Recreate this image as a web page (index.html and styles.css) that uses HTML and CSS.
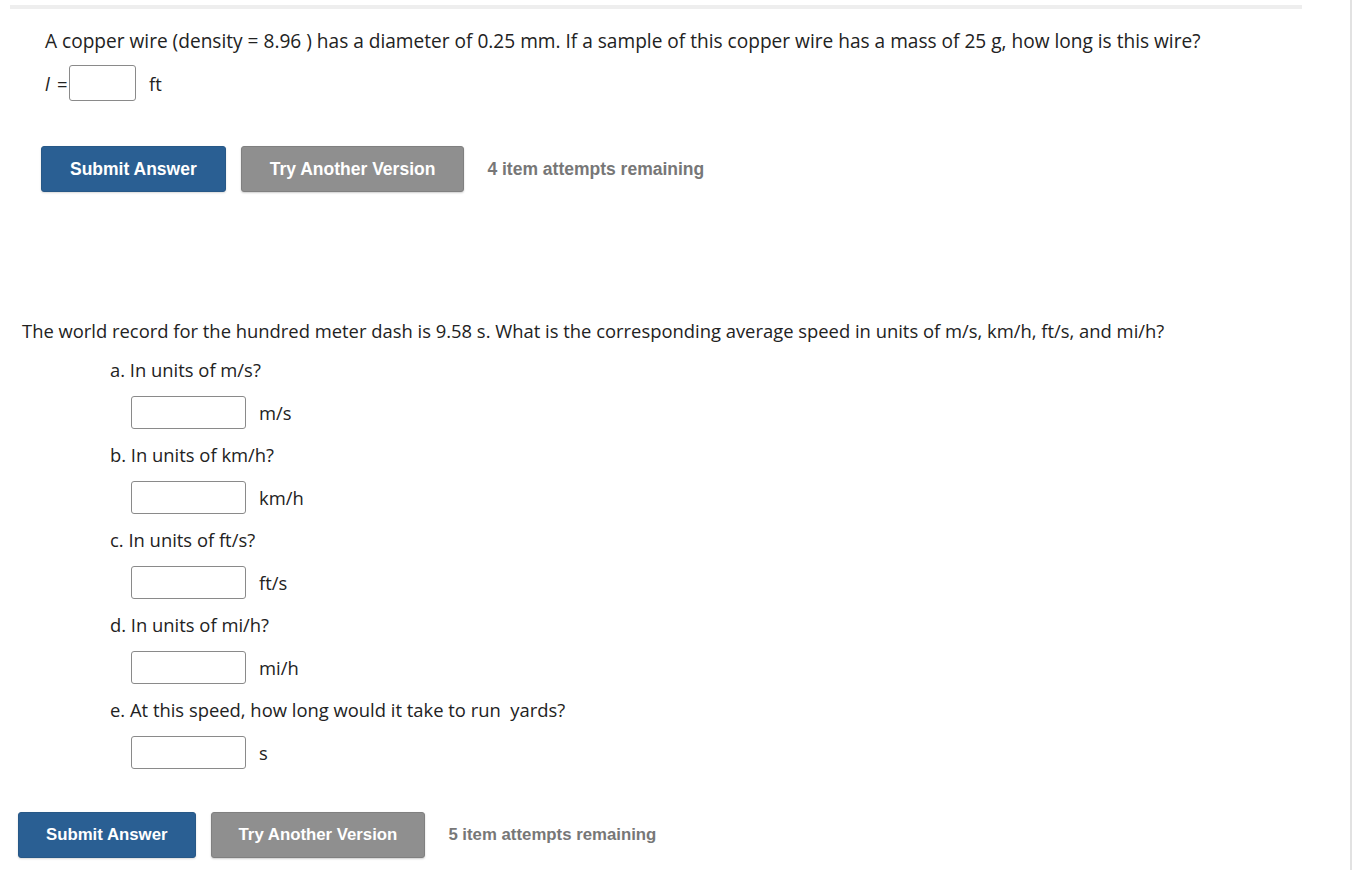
FILE: index.html
```html
<!DOCTYPE html>
<html>
<head>
<meta charset="utf-8">
<link rel="stylesheet" href="styles.css">
</head>
<body>
<div class="page">
  <div class="topbar"></div>

  <section class="q1">
    <p class="qtext">A copper wire (density = 8.96 ) has a diameter of 0.25 mm. If a sample of this copper wire has a mass of 25 g, how long is this wire?</p>
    <div class="answer-row">
      <span class="var">l</span><span class="eq">=</span><span class="box box-small"></span><span class="unit">ft</span>
    </div>
    <div class="actions">
      <button class="btn btn-primary">Submit Answer</button>
      <button class="btn btn-secondary">Try Another Version</button>
      <span class="attempts">4 item attempts remaining</span>
    </div>
  </section>

  <section class="q2">
    <p class="qtext">The world record for the hundred meter dash is 9.58 s. What is the corresponding average speed in units of m/s, km/h, ft/s, and mi/h?</p>
    <ol class="parts">
      <li class="part">
        <div class="part-label">a. In units of m/s?</div>
        <div class="part-answer"><span class="box"></span><span class="unit">m/s</span></div>
      </li>
      <li class="part">
        <div class="part-label">b. In units of km/h?</div>
        <div class="part-answer"><span class="box"></span><span class="unit">km/h</span></div>
      </li>
      <li class="part">
        <div class="part-label">c. In units of ft/s?</div>
        <div class="part-answer"><span class="box"></span><span class="unit">ft/s</span></div>
      </li>
      <li class="part">
        <div class="part-label">d. In units of mi/h?</div>
        <div class="part-answer"><span class="box"></span><span class="unit">mi/h</span></div>
      </li>
      <li class="part">
        <div class="part-label">e. At this speed, how long would it take to run &nbsp;yards?</div>
        <div class="part-answer"><span class="box"></span><span class="unit">s</span></div>
      </li>
    </ol>
    <div class="actions actions-compact">
      <button class="btn btn-primary">Submit Answer</button>
      <button class="btn btn-secondary">Try Another Version</button>
      <span class="attempts">5 item attempts remaining</span>
    </div>
  </section>
</div>
</body>
</html>
```

FILE: styles.css
```css
* { box-sizing: border-box; }

html, body {
  margin: 0;
  padding: 0;
  background: #ffffff;
}

body {
  font-family: "Open Sans", "Liberation Sans", sans-serif;
  font-size: 18.4px;
  color: #222222;
}

.page {
  width: 1352px;
  min-height: 870px;
  border-right: 2px solid #e2e2e2;
  padding-top: 5px;
}

.topbar {
  margin-left: 10px;
  width: 1292px;
  height: 4px;
  background: #eeeeee;
}

.qtext {
  margin: 0;
  line-height: 24px;
}

.q1 {
  padding-left: 45px;
  padding-top: 20px;
}

.q1 .qtext {
  font-size: 19.1px;
}

.answer-row {
  display: flex;
  align-items: center;
  margin-top: 12px;
  height: 36px;
}

.var {
  font-style: italic;
  width: 12px;
}

.eq {
  width: 12px;
}

.box {
  display: inline-block;
  width: 115px;
  height: 33px;
  border: 1px solid #8a8a8a;
  border-radius: 3px;
  background: #fff;
}

.box-small {
  width: 67px;
  height: 36px;
}

.unit {
  margin-left: 13px;
}

.actions {
  display: flex;
  align-items: center;
  gap: 15px;
  margin-top: 45px;
  margin-left: -4px;
}

.btn {
  font-family: "Liberation Sans", Arial, sans-serif;
  font-weight: bold;
  font-size: 17.5px;
  height: 46px;
  padding: 0 28px;
  border-radius: 3px;
  color: #ffffff;
  cursor: pointer;
}

.btn-primary {
  background: #2a5f93;
  border: 1px solid #275887;
  box-shadow: 0 1px 2px rgba(0,0,0,0.15);
}

.btn-secondary {
  background: #8f8f8f;
  border: 1px solid #808080;
  box-shadow: 0 1px 2px rgba(0,0,0,0.2);
}

.attempts {
  font-family: "Liberation Sans", Arial, sans-serif;
  font-weight: bold;
  font-size: 17.5px;
  color: #777777;
  margin-left: 8px;
}

.q2 {
  padding-left: 22px;
  margin-top: 127px;
}

.parts {
  list-style: none;
  margin: 15px 0 0 0;
  padding: 0 0 0 88px;
}

.part-label {
  line-height: 24px;
}

.part-answer {
  display: flex;
  align-items: center;
  margin: 14px 0 14px 21px;
}

.actions-compact {
  margin-top: 43px;
}

.actions-compact .btn {
  font-size: 16.8px;
  padding: 0 27px;
}

.actions-compact .attempts {
  font-size: 16.8px;
}
```
